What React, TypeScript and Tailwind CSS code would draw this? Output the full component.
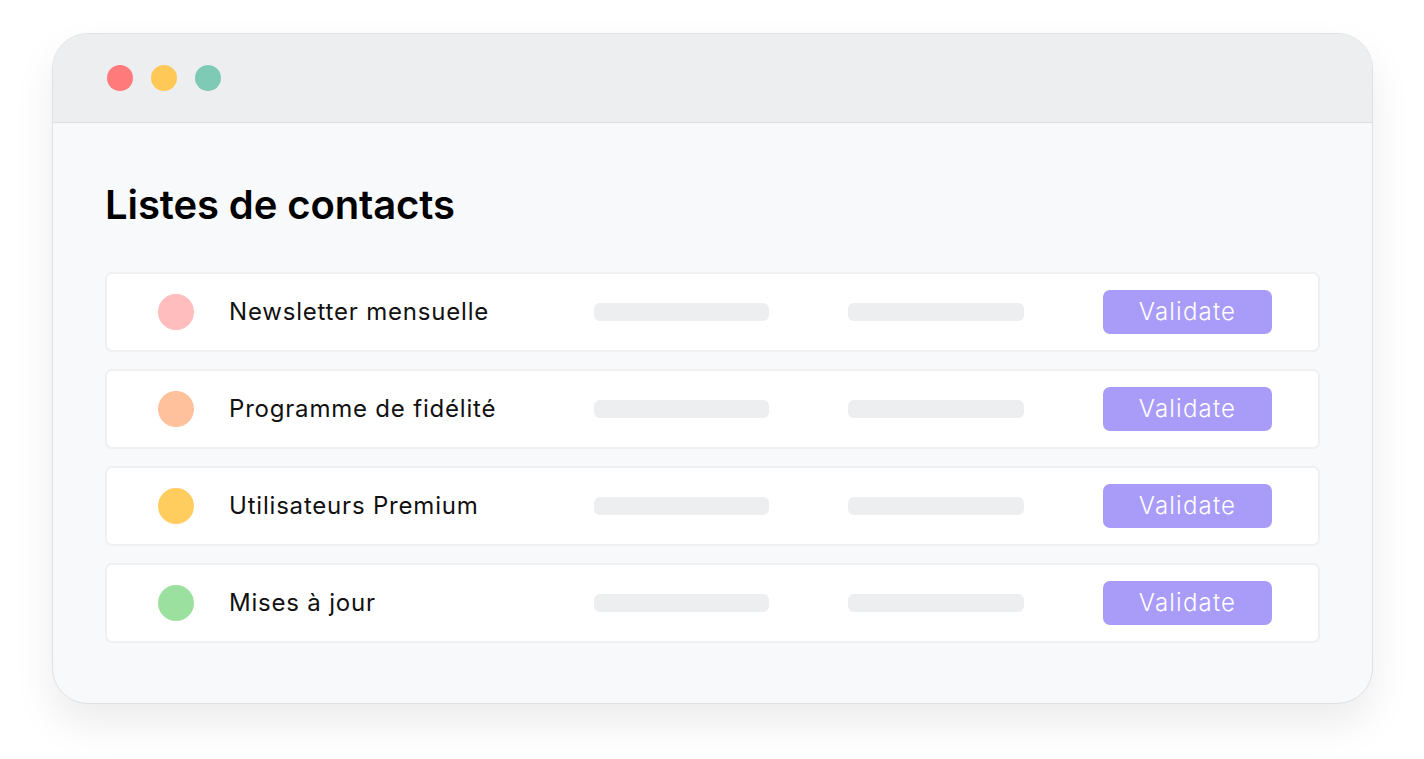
import React from "react";

const rows = [
  { name: "Newsletter mensuelle", dot: "bg-[#ffbdbd]" },
  { name: "Programme de fidélité", dot: "bg-[#ffc09c]" },
  { name: "Utilisateurs Premium", dot: "bg-[#ffcd5e]" },
  { name: "Mises à jour", dot: "bg-[#9be09f]" },
];

export default function App() {
  return (
    <div
      className="w-[1424px] h-[759px] bg-white pt-[33px] pl-[52px]"
      style={{ fontFamily: "Inter, 'Noto Sans', sans-serif" }}
    >
      <div className="w-[1321px] h-[671px] rounded-[36px] border border-[#dfe1e4] bg-[#f8f9fb] overflow-hidden shadow-[0_20px_40px_rgba(0,0,0,0.08)] flex flex-col">
        {/* Title bar */}
        <div className="h-[89px] shrink-0 bg-[#eceef0] border-b border-[#dcdfe2] flex items-center gap-[18px] pl-[54px]">
          <span className="w-[26px] h-[26px] rounded-full bg-[#ff7a7a]" />
          <span className="w-[26px] h-[26px] rounded-full bg-[#ffc857]" />
          <span className="w-[26px] h-[26px] rounded-full bg-[#7ecab4]" />
        </div>

        {/* Body */}
        <div className="px-[52px] pt-[58px]">
          <h1 className="text-[40px] leading-[48px] font-semibold text-black tracking-[-0.1px]">
            Listes de contacts
          </h1>

          <div className="mt-[43px] flex flex-col gap-[17px]">
            {rows.map((r) => (
              <div
                key={r.name}
                className="h-[80px] bg-white border-2 border-[#eef0f2] rounded-[7px] flex items-center"
              >
                <span className={`ml-[51px] w-[36px] h-[36px] rounded-full shrink-0 ${r.dot}`} />
                <span className="ml-[35px] w-[365px] text-[24px] text-[#111] leading-none tracking-[0.8px]">
                  {r.name}
                </span>
                <span className="w-[175px] h-[18px] rounded-[6px] bg-[#eceef0]" />
                <span className="ml-[79px] w-[176px] h-[18px] rounded-[6px] bg-[#eceef0]" />
                <button className="ml-[79px] w-[169px] h-[44px] rounded-[7px] bg-[#a99cf9] text-white text-[24px] font-light tracking-[1.2px]">
                  Validate
                </button>
              </div>
            ))}
          </div>
        </div>
      </div>
    </div>
  );
}
